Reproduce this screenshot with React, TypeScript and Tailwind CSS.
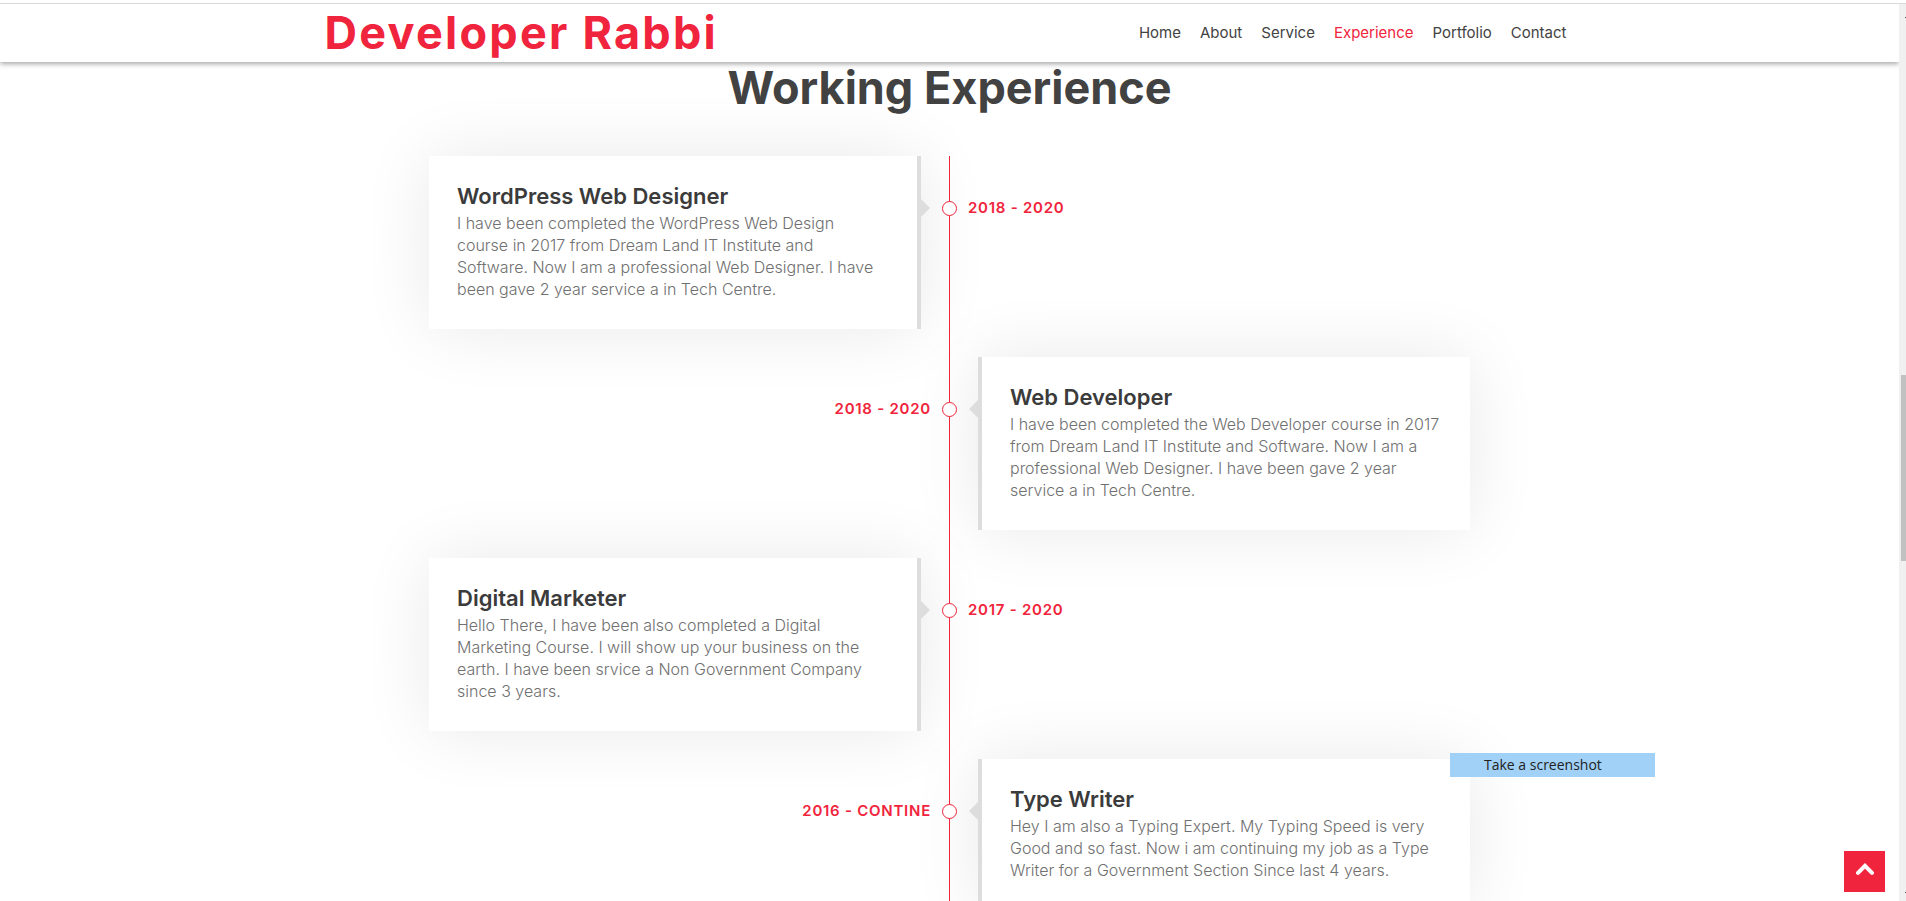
type Job = { title: string; period: string; lines: string[] };

const links = ["Home", "About", "Service", "Experience", "Portfolio", "Contact"];

const jobs: Job[] = [
  {
    title: "WordPress Web Designer",
    period: "2018 - 2020",
    lines: [
      "I have been completed the WordPress Web Design",
      "course in 2017 from Dream Land IT Institute and",
      "Software. Now I am a professional Web Designer. I have",
      "been gave 2 year service a in Tech Centre.",
    ],
  },
  {
    title: "Web Developer",
    period: "2018 - 2020",
    lines: [
      "I have been completed the Web Developer course in 2017",
      "from Dream Land IT Institute and Software. Now I am a",
      "professional Web Designer. I have been gave 2 year",
      "service a in Tech Centre.",
    ],
  },
  {
    title: "Digital Marketer",
    period: "2017 - 2020",
    lines: [
      "Hello There, I have been also completed a Digital",
      "Marketing Course. I will show up your business on the",
      "earth. I have been srvice a Non Government Company",
      "since 3 years.",
    ],
  },
  {
    title: "Type Writer",
    period: "2016 - CONTINE",
    lines: [
      "Hey I am also a Typing Expert. My Typing Speed is very",
      "Good and so fast. Now i am continuing my job as a Type",
      "Writer for a Government Section Since last 4 years.",
    ],
  },
];

function Header() {
  return (
    <header className="relative z-10 h-[58px] bg-white shadow-[0_2px_5px_rgba(0,0,0,0.35)]">
      <div className="mx-auto flex h-full max-w-[1250px] items-center justify-between">
        <a href="#home" className="text-[45px] leading-[48px] font-bold tracking-wider text-[#f0243c]">
          Developer Rabbi
        </a>
        <nav className="flex gap-[19px] pr-2 text-[15px] leading-6">
          {links.map((name) => (
            <a
              key={name}
              href={`#${name.toLowerCase()}`}
              className={name === "Experience" ? "text-[#f0243c]" : "text-[#424242]"}
            >
              {name}
            </a>
          ))}
        </nav>
      </div>
    </header>
  );
}

function Entry({ job, left }: { job: Job; left: boolean }) {
  return (
    <li className="relative grid grid-cols-[1fr_1px_1fr]">
      <div className={left ? "order-1 pr-7" : "order-3 pl-7"}>
        <article
          className={
            left
              ? "relative border-r-4 border-[#dddddd] bg-white pt-7 pr-5 pb-[29px] pl-7 shadow-[0_0_70px_rgba(0,0,0,0.09)]"
              : "relative border-l-4 border-[#dddddd] bg-white pt-7 pr-5 pb-[29px] pl-7 shadow-[0_0_70px_rgba(0,0,0,0.09)]"
          }
        >
          <h3 className="mb-1 text-[22px] leading-6 font-semibold text-[#3b3b3b]">{job.title}</h3>
          <p className="text-base leading-[22px] font-light text-[#707070]">
            {job.lines.map((line) => (
              <span key={line} className="block whitespace-nowrap">
                {line}
              </span>
            ))}
          </p>
          <svg
            aria-hidden="true"
            viewBox="0 0 9 18"
            className={
              left
                ? "absolute top-[43px] -right-[13px] h-[18px] w-[9px] fill-[#dddddd]"
                : "absolute top-[43px] -left-[13px] h-[18px] w-[9px] rotate-180 fill-[#dddddd]"
            }
          >
            <path d="M0 0 9 9 0 18Z" />
          </svg>
        </article>
      </div>
      <span className="order-2" />
      <div
        className={
          left
            ? "order-3 pt-10 pl-[18px] text-[15px] leading-6 font-semibold tracking-wider text-[#f0243c]"
            : "order-1 pt-10 pr-[18px] text-right text-[15px] leading-6 font-semibold tracking-wider text-[#f0243c]"
        }
      >
        {job.period}
      </div>
      <span className="absolute inset-x-0 top-[45px] z-[1] mx-auto size-[15px] rounded-full border border-[#f0243c] bg-white" />
    </li>
  );
}

export default function App() {
  return (
    <div className="flex h-screen flex-col overflow-hidden bg-white font-['Inter',sans-serif]">
      <div className="h-1 shrink-0 border-b border-[#dadada]" />
      <div className="flex min-h-0 flex-1">
        <div className="min-w-0 flex-1 overflow-hidden">
          <Header />
          <main>
            <h2 className="text-center text-[45px] leading-[52px] font-bold text-[#424242]">Working Experience</h2>
            <div className="relative mx-auto mt-[42px] max-w-[1041px]">
              <ol className="flex flex-col gap-7">
                {jobs.map((job, i) => (
                  <Entry key={job.title} job={job} left={i % 2 === 0} />
                ))}
              </ol>
              <div aria-hidden="true" className="absolute inset-0 mx-auto w-px bg-[#f0243c]" />
            </div>
          </main>
        </div>
        <div aria-hidden="true" className="flex w-[7px] flex-col bg-[#f0f0f0] pt-[13px] pb-2 pl-0.5">
          <div className="h-px w-px self-end bg-[#505050]" />
          <div className="mt-[357px] h-[186px] bg-[#c1c1c1]" />
          <div className="mt-auto h-px w-px self-end bg-[#505050]" />
        </div>
      </div>
      <div className="fixed top-[753px] left-[1450px] z-10 h-6 w-[205px] bg-[#a1d1f7] pl-[34px] font-['Open_Sans',sans-serif] text-sm leading-6 text-[#222222]">
        Take a screenshot
      </div>
      <button
        type="button"
        aria-label="Back to top"
        className="fixed right-[21px] bottom-[9px] z-10 flex size-[41px] items-start justify-center bg-[#f0243c] pt-3"
      >
        <svg viewBox="0 0 18 12" className="h-3 w-[18px] fill-none stroke-white" strokeWidth="4" strokeLinecap="round" strokeLinejoin="miter">
          <path d="M2 9.8 9 2.8 16 9.8" />
        </svg>
      </button>
    </div>
  );
}
